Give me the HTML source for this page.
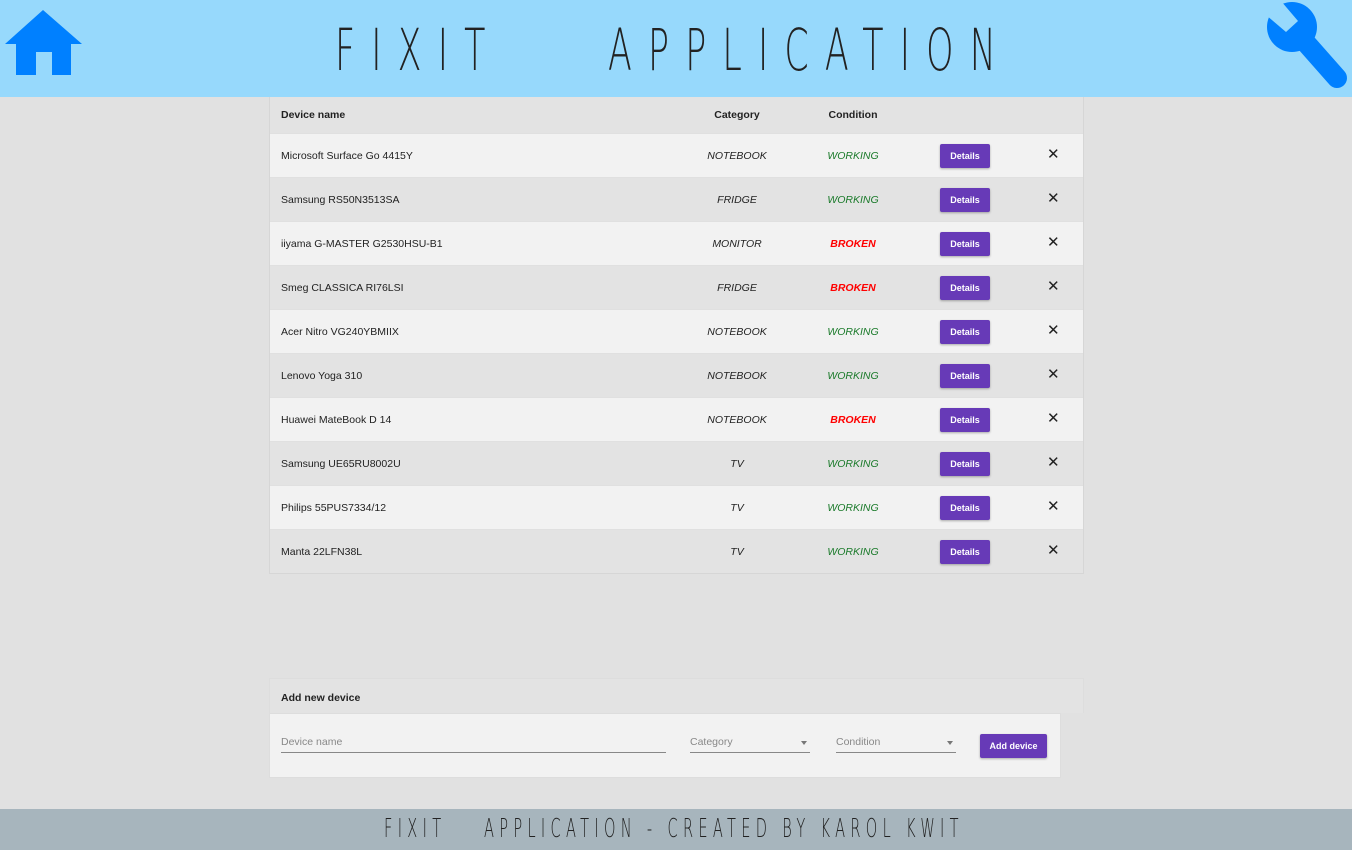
<!DOCTYPE html>
<html><head><style>
*{margin:0;padding:0;box-sizing:border-box}
body{width:1352px;height:850px;background:#e1e1e1;font-family:"Liberation Sans",sans-serif;position:relative;overflow:hidden;font-size:10.5px;color:#222}
.hdr{position:absolute;left:0;top:0;width:1352px;height:97px;background:#97d9fc}
.t{position:absolute;top:16px;font-family:"DejaVu Sans",sans-serif;font-weight:200;font-size:58px;color:#222;white-space:nowrap;transform:scaleX(0.6);transform-origin:left;letter-spacing:27px}
.tbl{position:absolute;left:269px;top:97px;width:815px;border-right:1px solid #d6d6d6;border-left:1px solid #d6d6d6;border-bottom:1px solid #d6d6d6}
.row{height:44px;position:relative;border-top:1px solid #e0e0e0}
.row.h{height:36px;background:#e3e3e3;font-weight:bold;border:none}
.row.h .c{font-style:normal;color:#222}
.row:nth-child(even){background:#f2f2f2}
.row:nth-child(odd){background:#e3e3e3}
.c{position:absolute;top:50%;transform:translateY(-50%)}
.n{left:11px}
.cat{left:467px;width:0;display:flex;justify-content:center;font-style:italic;white-space:nowrap}
.cat span,.cond span{display:block}
.cond{left:583px;width:0;display:flex;justify-content:center;font-style:italic;white-space:nowrap}
.w{color:#1a7a2a}.b{color:#f00;font-weight:bold}
.btn{position:absolute;left:670px;top:10px;width:50px;height:24px;background:#673ab7;color:#fff;font-weight:bold;font-size:9px;text-align:center;line-height:24px;border-radius:2px;box-shadow:0 1px 2px rgba(0,0,0,.3)}
.x{position:absolute;left:777px;top:11px;font-size:15px;color:#222}
.add{position:absolute;left:269px;top:678px;width:815px;height:35px;background:#e3e3e3;border:1px solid #ddd;border-bottom:none;font-weight:bold;padding:13px 11px}
.addb{position:absolute;left:269px;top:713px;width:792px;height:65px;background:#f2f2f2;border:1px solid #ddd}
.f{position:absolute;top:22px;border-bottom:1px solid #888;color:#888;height:17px;font-size:10.5px}
.f i{position:absolute;right:3px;top:5px;border:3.5px solid transparent;border-top:4px solid #777}
.ftr{position:absolute;left:0;top:809px;width:1352px;height:41px;background:#a7b5bd}
.ft{position:absolute;top:5px;font-family:"DejaVu Sans",sans-serif;font-weight:200;font-size:26px;color:#222;white-space:nowrap;transform:scaleX(0.56);transform-origin:left;letter-spacing:9.5px}
</style></head><body>
<div class="hdr">
<svg style="position:absolute;left:5px;top:10px" width="78" height="66" viewBox="0 0 78 66"><path d="M38 0 L77 34 L66 34 L66 65 L47 65 L47 42 L31 42 L31 65 L11 65 L11 34 L0 34Z" fill="#0080ff"/></svg>
<svg style="position:absolute;left:1240px;top:0" width="112" height="97" viewBox="0 0 112 97"><circle cx="52" cy="27" r="25" fill="#0080ff"/><line x1="52" y1="27" x2="97" y2="78" stroke="#0080ff" stroke-width="20" stroke-linecap="round"/><polygon points="26,15 46,32 58,21 41,1 38,0 20,0" fill="#97d9fc"/></svg>
<div class="t" style="left:335px">FIXIT</div>
<div class="t" style="left:608px">APPLICATION</div>
</div>
<div class="tbl">
<div class="row h"><div class="c n">Device name</div><div class="c cat"><span>Category</span></div><div class="c cond"><span>Condition</span></div></div>
<div class="row"><div class="c n">Microsoft Surface Go 4415Y</div><div class="c cat"><span>NOTEBOOK</span></div><div class="c cond"><span class="w">WORKING</span></div><div class="btn">Details</div><div class="x">✕</div></div>
<div class="row"><div class="c n">Samsung RS50N3513SA</div><div class="c cat"><span>FRIDGE</span></div><div class="c cond"><span class="w">WORKING</span></div><div class="btn">Details</div><div class="x">✕</div></div>
<div class="row"><div class="c n">iiyama G-MASTER G2530HSU-B1</div><div class="c cat"><span>MONITOR</span></div><div class="c cond"><span class="b">BROKEN</span></div><div class="btn">Details</div><div class="x">✕</div></div>
<div class="row"><div class="c n">Smeg CLASSICA RI76LSI</div><div class="c cat"><span>FRIDGE</span></div><div class="c cond"><span class="b">BROKEN</span></div><div class="btn">Details</div><div class="x">✕</div></div>
<div class="row"><div class="c n">Acer Nitro VG240YBMIIX</div><div class="c cat"><span>NOTEBOOK</span></div><div class="c cond"><span class="w">WORKING</span></div><div class="btn">Details</div><div class="x">✕</div></div>
<div class="row"><div class="c n">Lenovo Yoga 310</div><div class="c cat"><span>NOTEBOOK</span></div><div class="c cond"><span class="w">WORKING</span></div><div class="btn">Details</div><div class="x">✕</div></div>
<div class="row"><div class="c n">Huawei MateBook D 14</div><div class="c cat"><span>NOTEBOOK</span></div><div class="c cond"><span class="b">BROKEN</span></div><div class="btn">Details</div><div class="x">✕</div></div>
<div class="row"><div class="c n">Samsung UE65RU8002U</div><div class="c cat"><span>TV</span></div><div class="c cond"><span class="w">WORKING</span></div><div class="btn">Details</div><div class="x">✕</div></div>
<div class="row"><div class="c n">Philips 55PUS7334/12</div><div class="c cat"><span>TV</span></div><div class="c cond"><span class="w">WORKING</span></div><div class="btn">Details</div><div class="x">✕</div></div>
<div class="row"><div class="c n">Manta 22LFN38L</div><div class="c cat"><span>TV</span></div><div class="c cond"><span class="w">WORKING</span></div><div class="btn">Details</div><div class="x">✕</div></div>
</div>
<div class="add">Add new device</div>
<div class="addb">
<div class="f" style="left:11px;width:385px">Device name</div>
<div class="f" style="left:420px;width:120px">Category<i></i></div>
<div class="f" style="left:566px;width:120px">Condition<i></i></div>
<div class="btn" style="left:710px;top:20px;width:67px;height:24px">Add device</div>
</div>
<div class="ftr"><div class="ft" style="left:384px">FIXIT</div><div class="ft" style="left:484px">APPLICATION - CREATED BY KAROL KWIT</div></div>
</body></html>
